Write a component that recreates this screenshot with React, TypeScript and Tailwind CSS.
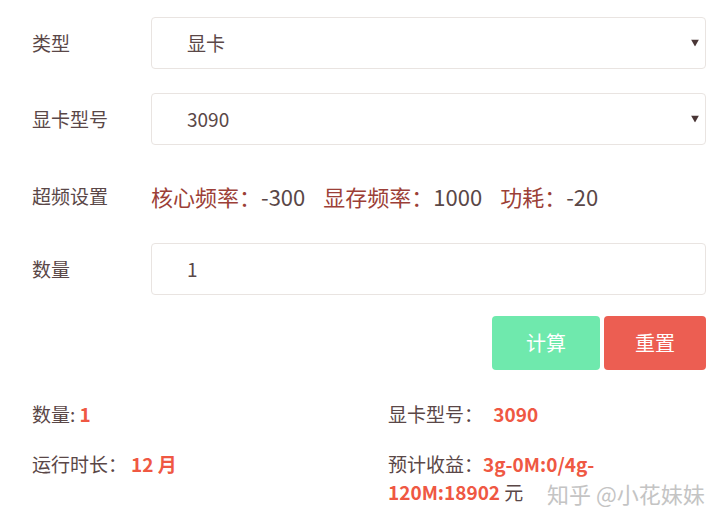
import React from "react";

const font = { fontFamily: '"Noto Sans CJK SC", "Noto Sans", sans-serif' };

const Arrow = () => (
  <svg width="8" height="7" viewBox="0 0 8 7" className="absolute right-[6px] top-1/2 -translate-y-1/2">
    <path d="M0 0 H8 L4 7 Z" fill="#4a3636" />
  </svg>
);

const Field = ({ value, select }: { value: string; select?: boolean }) => (
  <div className="relative flex h-[52px] flex-1 items-center rounded-[4px] border border-[#e9e4e1] bg-white pl-[35px] text-[19px] text-[#5a4747]">
    {value}
    {select && <Arrow />}
  </div>
);

const Row = ({ label, children, className }: { label: string; children: React.ReactNode; className?: string }) => (
  <div className={`flex items-center ${className ?? ""}`}>
    <div className="w-[119px] shrink-0 text-[19px] text-[#5a4747]">{label}</div>
    {children}
  </div>
);

export default function App() {
  const red = "font-bold text-[#ef5843]";
  return (
    <div className="relative h-[519px] w-[720px] overflow-hidden bg-white pl-[32px] pr-[14px] pt-[17px]" style={font}>
      <Row label="类型">
        <Field value="显卡" select />
      </Row>
      <Row label="显卡型号" className="mt-[24px]">
        <Field value="3090" select />
      </Row>
      <Row label="超频设置" className="mt-[25px] h-[52px]">
        <div className="flex items-center gap-[18px] text-[22px] text-[#5a4747]">
          <span>
            <span className="text-[#9c3f37]">核心频率：</span>-300
          </span>
          <span>
            <span className="text-[#9c3f37]">显存频率：</span>1000
          </span>
          <span>
            <span className="text-[#9c3f37]">功耗：</span>-20
          </span>
        </div>
      </Row>
      <Row label="数量" className="mt-[21px]">
        <Field value="1" />
      </Row>
      <div className="mt-[21px] flex justify-end gap-[4px]">
        <button className="h-[54px] w-[108px] rounded-[4px] bg-[#6fe9ad] text-[20px] text-white">计算</button>
        <button className="h-[54px] w-[102px] rounded-[4px] bg-[#ec5e52] text-[20px] text-white">重置</button>
      </div>
      <div className="mt-[30px] grid grid-cols-[356px_1fr] gap-y-[22px] text-[19px] leading-[28px] text-[#5a4747]">
        <div>
          数量: <span className={red}>1</span>
        </div>
        <div>
          显卡型号： <span className={`${red} ml-[6px]`}>3090</span>
        </div>
        <div>
          运行时长：<span className={`${red} ml-[4px]`}>12 月</span>
        </div>
        <div className="w-[225px]">
          预计收益：<span className={red}>3g-0M:0/4g-120M:18902</span> 元
        </div>
      </div>
      <div className="absolute left-[547px] top-[477px] text-[22px] text-[#c4c4c4]">知乎 @小花妹妹</div>
    </div>
  );
}
